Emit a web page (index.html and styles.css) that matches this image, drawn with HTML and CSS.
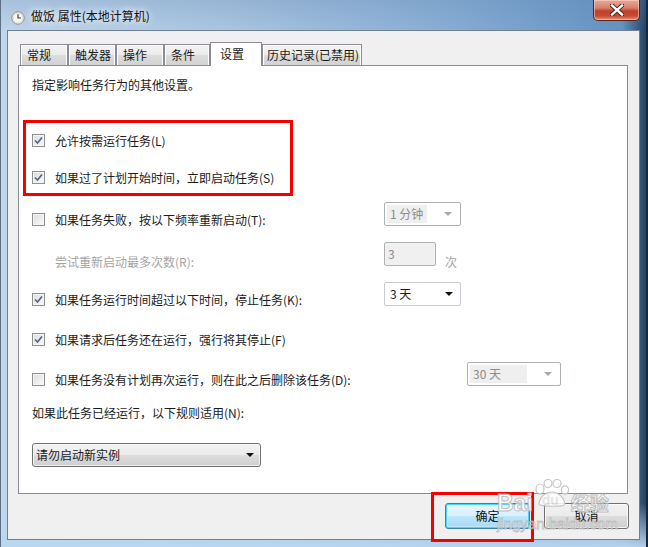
FILE: index.html
```html
<!DOCTYPE html>
<html lang="zh-CN">
<head>
<meta charset="utf-8">
<title>做饭 属性(本地计算机)</title>
<link rel="stylesheet" href="styles.css">
</head>
<body>
<div class="window">
  <div class="titlebar">
    <svg class="app-icon" width="14" height="14" viewBox="0 0 14 14">
      <circle cx="7" cy="7" r="6.2" fill="#f7f7f4" stroke="#8d8d86" stroke-width="1"/>
      <circle cx="7" cy="7" r="4.8" fill="none" stroke="#d8d8d0" stroke-width="0.8"/>
      <path d="M7 3.2 V7 H10" fill="none" stroke="#3c3c3c" stroke-width="1.2"/>
    </svg>
    <span class="title">做饭 属性(本地计算机)</span>
    <div class="close">
      <svg width="14" height="12" viewBox="0 0 14 12">
        <path d="M2 1.5 L12 10.5 M12 1.5 L2 10.5" stroke="#3b1a14" stroke-width="4.2" stroke-linecap="square"/>
        <path d="M2 1.5 L12 10.5 M12 1.5 L2 10.5" stroke="#ffffff" stroke-width="2.4" stroke-linecap="square"/>
      </svg>
    </div>
  </div>

  <div class="client">
    <div class="tabs">
      <div class="tab t1">常规</div>
      <div class="tab t2">触发器</div>
      <div class="tab t3">操作</div>
      <div class="tab t4">条件</div>
      <div class="tab selected">设置</div>
      <div class="tab t6">历史记录(已禁用)</div>
    </div>

    <div class="panel">
      <p class="intro">指定影响任务行为的其他设置。</p>

      <div class="row first">
        <span class="cb checked"><svg width="11" height="11" viewBox="0 0 11 11"><path d="M2 5.5 L4.5 8 L9 2.5" fill="none" stroke="#56658a" stroke-width="1.7"/></svg></span>
        <span class="label">允许按需运行任务(L)</span>
      </div>
      <div class="row r2">
        <span class="cb checked"><svg width="11" height="11" viewBox="0 0 11 11"><path d="M2 5.5 L4.5 8 L9 2.5" fill="none" stroke="#56658a" stroke-width="1.7"/></svg></span>
        <span class="label">如果过了计划开始时间，立即启动任务(S)</span>
      </div>
      <div class="row r3">
        <span class="cb"></span>
        <span class="label">如果任务失败，按以下频率重新启动(T):</span>
        <span class="combo disabled"><span class="value">1 分钟</span><span class="arrow"></span></span>
      </div>
      <div class="row">
        <span class="cb blank"></span>
        <span class="label muted low">尝试重新启动最多次数(R):</span>
        <span class="textbox">3</span>
        <span class="unit">次</span>
      </div>
      <div class="row">
        <span class="cb checked"><svg width="11" height="11" viewBox="0 0 11 11"><path d="M2 5.5 L4.5 8 L9 2.5" fill="none" stroke="#56658a" stroke-width="1.7"/></svg></span>
        <span class="label">如果任务运行时间超过以下时间，停止任务(K):</span>
        <span class="combo"><span class="value">3 天</span><span class="arrow"></span></span>
      </div>
      <div class="row">
        <span class="cb checked"><svg width="11" height="11" viewBox="0 0 11 11"><path d="M2 5.5 L4.5 8 L9 2.5" fill="none" stroke="#56658a" stroke-width="1.7"/></svg></span>
        <span class="label">如果请求后任务还在运行，强行将其停止(F)</span>
      </div>
      <div class="row">
        <span class="cb"></span>
        <span class="label wide">如果任务没有计划再次运行，则在此之后删除该任务(D):</span>
        <span class="combo disabled long"><span class="value">30 天</span><span class="arrow"></span></span>
      </div>

      <p class="rule-text">如果此任务已经运行，以下规则适用(N):</p>
      <div class="select-btn"><span>请勿启动新实例</span><span class="arrow"></span></div>
    </div>

    <div class="buttons">
      <button class="btn default">确定</button>
      <button class="btn">取消</button>
    </div>
  </div>

  <div class="mark mark-a"></div>
  <div class="mark mark-b"></div>

  <div class="watermark">
    <div class="wm-top">
      <span class="wm-bai">Bai</span>
      <span class="wm-paw">
        <svg width="38" height="28" viewBox="0 0 38 28">
          <g fill="#ffffff" stroke="#bdbdbd" stroke-width="1.2">
            <ellipse cx="7" cy="10" rx="4" ry="5"/>
            <ellipse cx="15" cy="4.5" rx="4" ry="4"/>
            <ellipse cx="24" cy="4.5" rx="4" ry="4"/>
            <ellipse cx="32" cy="11" rx="3.6" ry="4.2"/>
            <path d="M6 25 C7 17 13 13 19 13 C25 13 31 18 32 25 C32 28 6 28 6 25 Z"/>
          </g>
        </svg>
        <span class="wm-du">du</span>
      </span>
      <span class="wm-jy">经验</span>
    </div>
    <div class="wm-url">jingyan.baidu.com</div>
  </div>
</div>
</body>
</html>
```

FILE: styles.css
```css
* { box-sizing: border-box; }

html, body {
  margin: 0;
  padding: 0;
  background: #6f9bc6;
}

body {
  font-family: "Noto Sans CJK SC", "Noto Sans", sans-serif;
  font-size: 12px;
  color: #1a1a1a;
}

.window {
  position: relative;
  width: 648px;
  height: 547px;
  overflow: hidden;
  display: flex;
  flex-direction: column;
  background:
    linear-gradient(180deg, rgba(90,130,175,0.25) 0%, rgba(255,255,255,0) 6%, rgba(255,255,255,0) 92%, rgba(185,215,242,0.95) 100%),
    linear-gradient(90deg, #c2d6eb 0%, #abc6e1 35%, #88add4 70%, #6593c2 96%, #1f3a57 100%);
  box-shadow: inset 1px 0 0 #5c6f84, inset -2px 0 0 #13273d;
}

/* ---------- title bar ---------- */
.titlebar {
  height: 30px;
  display: flex;
  align-items: flex-start;
  padding-left: 11px;
  padding-right: 8px;
}

.app-icon {
  margin-top: 11px;
  flex: none;
}

.title {
  margin-left: 6px;
  margin-top: 8px;
  line-height: 16px;
  font-size: 12px;
  color: #111;
  text-shadow: 0 0 6px #ffffff, 0 0 10px rgba(255,255,255,0.85);
  white-space: nowrap;
}

.close {
  margin-left: auto;
  width: 47px;
  height: 21px;
  display: flex;
  align-items: center;
  justify-content: center;
  border: 1px solid #5a2219;
  border-top: none;
  border-radius: 0 0 5px 5px;
  background: linear-gradient(180deg, #e9a999 0%, #d7806b 40%, #c0402a 55%, #c74b33 80%, #e1937c 100%);
  box-shadow: inset 0 0 0 1px rgba(255,220,210,0.55);
}

/* ---------- client area ---------- */
.client {
  flex: 1;
  margin: 0 8px 7px 7px;
  border: 1px solid #6d7f93;
  background: #f0f0f0;
  padding: 11px 11px 0 10px;
  display: flex;
  flex-direction: column;
}

.tabs {
  display: flex;
  align-items: flex-end;
  height: 23px;
  padding-left: 2px;
  position: relative;
  z-index: 2;
}

.tab {
  height: 21px;
  border: 1px solid #898c95;
  border-bottom: none;
  padding: 2px 0 0 6px;
  line-height: 16px;
  background: linear-gradient(180deg, #f3f3f3 0%, #ebebeb 50%, #dddddd 51%, #d2d2d2 100%);
  box-shadow: inset 1px 1px 0 #ffffff, inset -1px 0 0 #fdfdfd;
  white-space: nowrap;
}

.t1 { width: 48px; }
.t2 { width: 48px; }
.t3 { width: 48px; }
.t4 { width: 46px; }
.t6 { width: 100px; padding-left: 4px; }

.tab.selected {
  width: 52px;
  height: 24px;
  margin-bottom: -1px;
  padding: 3px 0 0 9px;
  background: #ffffff;
  box-shadow: none;
}

.panel {
  height: 429px;
  border: 1px solid #898c95;
  background: #ffffff;
  padding: 11px 0 0 13px;
}

.intro {
  margin: 0;
  line-height: 16px;
}

.row {
  display: flex;
  align-items: flex-start;
  height: 24px;
  margin-top: 16px;
}

.row.first { margin-top: 30px; }
.row.r2 { margin-top: 13px; }
.row.r3 { margin-top: 18px; }

.cb {
  flex: none;
  width: 13px;
  height: 13px;
  margin-top: 11px;
  margin-right: 10px;
  border: 1px solid #8e8f8f;
  background: linear-gradient(135deg, #d9d9d9 0%, #ececec 50%, #fafafa 100%);
  box-shadow: inset 0 0 0 1px #f4f4f4;
  display: flex;
  align-items: center;
  justify-content: center;
}

.cb svg { display: block; }

.cb.blank {
  border-color: transparent;
  background: none;
  box-shadow: none;
}

.label {
  width: 329px;
  flex: none;
  margin-top: 10px;
  line-height: 16px;
  white-space: nowrap;
}

.label.wide { width: 412px; }
.label.low { margin-top: 12px; }
.muted { color: #a3a3a3; }

.combo {
  position: relative;
  width: 77px;
  height: 24px;
  border: 1px solid #c7cbd1;
  border-radius: 2px;
  background: #ffffff;
  padding: 2px;
  display: flex;
  align-items: center;
}

.combo .value {
  padding-left: 3px;
  line-height: 18px;
  flex: 1;
}

.combo .arrow {
  width: 0;
  height: 0;
  margin-right: 5px;
  border-left: 4px solid transparent;
  border-right: 4px solid transparent;
  border-top: 4px solid #111;
}

.combo.disabled {
  border-color: #adb2b5;
}

.combo.disabled .value {
  background: #efefef;
  color: #8c8c8c;
  margin-right: 17px;
  flex: 1;
}

.combo.disabled .arrow {
  border-top-color: #a8a8a8;
  margin-right: 6px;
}

.combo.long { width: 94px; }

.textbox {
  width: 52px;
  height: 24px;
  border: 1px solid #adb2b5;
  border-radius: 2px;
  background: #f0f0f0;
  color: #8c8c8c;
  padding: 2px 0 0 3px;
  line-height: 18px;
  margin-top: 0;
}

.unit {
  margin-left: 9px;
  margin-top: 12px;
  line-height: 16px;
  color: #a3a3a3;
}

.rule-text {
  margin: 19px 0 0 0;
  line-height: 16px;
}

.select-btn {
  margin-top: 22px;
  width: 229px;
  height: 24px;
  border: 1px solid #707070;
  border-radius: 3px;
  background: linear-gradient(180deg, #f2f2f2 0%, #ebebeb 50%, #dddddd 51%, #cfcfcf 100%);
  box-shadow: inset 0 0 0 1px rgba(255,255,255,0.7);
  display: flex;
  align-items: center;
  justify-content: space-between;
  padding: 0 6px 0 3px;
  line-height: 16px;
}

.select-btn .arrow {
  width: 0;
  height: 0;
  border-left: 4px solid transparent;
  border-right: 4px solid transparent;
  border-top: 4px solid #111;
}

.buttons {
  display: flex;
  justify-content: flex-end;
  gap: 14px;
  margin-top: 9px;
  margin-right: -1px;
}

.btn {
  width: 85px;
  height: 26px;
  font-family: inherit;
  font-size: 12px;
  color: #111;
  border: 1px solid #707070;
  border-radius: 3px;
  background: linear-gradient(180deg, #f2f2f2 0%, #ebebeb 50%, #dddddd 51%, #cfcfcf 100%);
  box-shadow: inset 0 0 0 1px rgba(255,255,255,0.75);
  padding: 0;
  line-height: 16px;
}

.btn.default {
  border-color: #3c7fb1;
  box-shadow: inset 0 0 0 1px #48d8fb, inset 0 0 0 2px rgba(200,240,255,0.6);
  background: linear-gradient(180deg, #eaf6fd 0%, #d9f0fc 50%, #bee6fd 51%, #a7d9f5 100%);
}

/* ---------- annotations ---------- */
.mark {
  position: absolute;
  border: 3px solid #f50000;
  z-index: 5;
}

.mark-a {
  left: 23px;
  top: 120px;
  width: 270px;
  height: 76px;
}

.mark-b {
  left: 431px;
  top: 492px;
  width: 103px;
  height: 50px;
}

/* ---------- watermark ---------- */
.watermark {
  position: absolute;
  left: 497px;
  top: 476px;
  z-index: 6;
  opacity: 0.85;
  pointer-events: none;
}

.wm-top {
  display: flex;
  align-items: flex-end;
  height: 37px;
}

.wm-bai {
  font-family: "Liberation Sans", Arial, sans-serif;
  font-weight: bold;
  font-size: 23px;
  line-height: 20px;
  color: #ffffff;
  -webkit-text-stroke: 1px #b8b8b8;
}

.wm-paw {
  position: relative;
  width: 38px;
  height: 28px;
  margin-bottom: 6px;
}

.wm-paw svg { display: block; }

.wm-du {
  position: absolute;
  left: 9px;
  top: 14px;
  font-family: "Liberation Sans", Arial, sans-serif;
  font-weight: bold;
  font-size: 14px;
  line-height: 14px;
  color: #e4e4e4;
}

.wm-jy {
  font-size: 19px;
  line-height: 20px;
  font-weight: bold;
  color: #ffffff;
  -webkit-text-stroke: 1px #b8b8b8;
}

.wm-url {
  font-family: "Liberation Sans", Arial, sans-serif;
  font-size: 15px;
  line-height: 14px;
  margin-top: 4px;
  color: #ffffff;
  -webkit-text-stroke: 0.8px #b8b8b8;
}
```
